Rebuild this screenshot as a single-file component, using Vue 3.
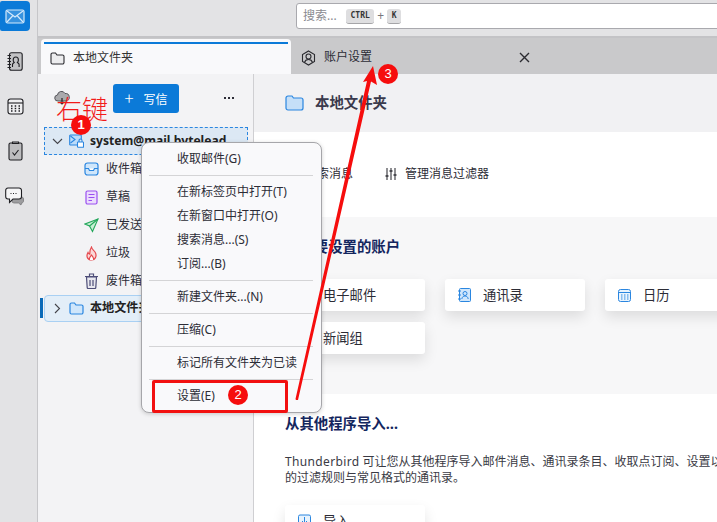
<script setup>
const menuGroups = [
  ['收取邮件(G)'],
  ['在新标签页中打开(T)', '在新窗口中打开(O)', '搜索消息...(S)', '订阅...(B)'],
  ['新建文件夹...(N)'],
  ['压缩(C)'],
  ['标记所有文件夹为已读'],
  ['设置(E)']
]
const marks = [
  { n: 1, cls: 'm1' },
  { n: 2, cls: 'm2' },
  { n: 3, cls: 'm3' }
]
</script>

<template>
  <div class="app">
    <nav class="rail">
      <div class="rail-btn active">
        <svg width="20" height="15" viewBox="0 0 20 15" fill="rgba(255,255,255,.18)" stroke="#d4e9fb" stroke-width="1.2"><rect x="1" y="1" width="18" height="13" rx="1.5"/><path d="M2 2l8 6 8-6M2 13l6-6.5M18 13l-6-6.5" fill="none"/></svg>
      </div>
      <div class="rail-btn">
        <svg width="16" height="19" viewBox="0 0 16 19" fill="#c2c2c4" stroke="#1f1f23" stroke-width="1.1"><rect x="2.500" y=".8" width="12.700" height="17.400" rx="2"/><path d="M.5 3.500h3.500M.5 6.500h3.500M.5 9.500h3.500M.5 12.500h3.500M.5 15.500h3.500" fill="none"/><path d="M5.500 15v-2.500c0-1 1-1.500 1.700-2-.7-.7-1-1.500-1-2.500C6.200 6.500 7.200 5 8.800 5s2.600 1.500 2.600 3c0 1-.3 1.800-1 2.500.7.500 1.700 1 1.700 2V15" fill="none"/></svg>
      </div>
      <div class="rail-btn">
        <svg width="17" height="17" viewBox="0 0 17 17" fill="#efeff1" stroke="#1f1f23" stroke-width="1.1"><rect x="1" y="1" width="15" height="15" rx="2.500"/><path d="M1 5h15" fill="none"/><path d="M4 8h1.500M7.700 8h1.500M11.500 8h1.500M4 10.500h1.500M7.700 10.500h1.500M11.500 10.500h1.500M4 13h1.500M7.700 13h1.500M11.500 13h1.500" fill="none" stroke-width="1.300"/></svg>
      </div>
      <div class="rail-btn">
        <svg width="15" height="20" viewBox="0 0 15 20" fill="#bdbdbf" stroke="#1f1f23" stroke-width="1.1"><rect x="1" y="2" width="13" height="17" rx="1.500"/><path d="M4.500 2.500V1h6v1.500z"/><path d="M4.500 11.500l2 2.500 4-5" fill="none"/></svg>
      </div>
      <div class="rail-btn">
        <svg width="20" height="19" viewBox="0 0 20 19"><path d="M7 10h10a2 2 0 0 1 1.500 2v2c0 1-.7 2-2 2l-.5 2-2.500-2H9a2 2 0 0 1-2-2z" fill="#9d9d9f" stroke="#77777a" stroke-width=".8"/><path d="M3 1h11a2.500 2.500 0 0 1 2.500 2.500v6A2.500 2.500 0 0 1 14 12H8l-3.500 3.500V12H3A2.500 2.500 0 0 1 .7 9.500v-6A2.500 2.500 0 0 1 3 1z" fill="#f5f5f6" stroke="#1f1f23" stroke-width="1.100"/><path d="M5.500 6.500h1M8 6.500h1M10.500 6.500h1" stroke="#1f1f23"/></svg>
      </div>
    </nav>

    <div class="main">
      <header class="topbar">
        <div class="search">
          <span class="placeholder">搜索...</span>
          <kbd class="key">CTRL</kbd>
          <span class="plus">+</span>
          <kbd class="key">K</kbd>
        </div>
      </header>

      <div class="tabs">
        <div class="tab selected">
          <svg width="15" height="13" viewBox="0 0 15 13" fill="#ececee" stroke="#2b2b30" stroke-width="1.100"><path d="M1 2.500A1.500 1.500 0 0 1 2.500 1h3L7 3h5.500A1.500 1.500 0 0 1 14 4.500v6a1.500 1.500 0 0 1-1.500 1.500h-10A1.500 1.500 0 0 1 1 10.500z"/></svg>
          <span>本地文件夹</span>
        </div>
        <div class="tab other">
          <svg width="15" height="16" viewBox="0 0 15 16" fill="none" stroke="#2b2b30" stroke-width="1.100"><path d="M7.500 1l6 3.500v7l-6 3.500-6-3.500v-7z"/><circle cx="7.500" cy="6.500" r="2.500"/><path d="M3.500 12.500c.5-2 2-3 4-3s3.500 1 4 3"/></svg>
          <span>账户设置</span>
          <svg class="close" width="11" height="11" viewBox="0 0 11 11" fill="none" stroke="#2b2b30" stroke-width="1.400"><path d="M1 1l9 9M10 1l-9 9"/></svg>
        </div>
      </div>

      <div class="body">
        <aside class="folders">
          <div class="pane-head">
            <svg class="cloud" width="16" height="16" viewBox="0 0 16 16"><path d="M4 11a3 3 0 0 1-.5-6A4 4 0 0 1 11 3.500 3.500 3.500 0 0 1 12 11z" fill="#a9a9ac" stroke="#55555a"/><path d="M8 8v6M6 12l2 2 2-2" fill="none" stroke="#222" stroke-width="1.200"/></svg>
            <button class="compose"><span class="compose-plus">+</span>写信</button>
            <span class="dots">
              <i></i><i></i><i></i>
            </span>
          </div>
          <div class="row account">
            <svg class="chev" width="11" height="7" viewBox="0 0 11 7" fill="none" stroke="#44444a" stroke-width="1.100"><path d="M1 1l4.500 4.500L10 1"/></svg>
            <svg class="acct-icon" width="15" height="14" viewBox="0 0 15 14" fill="#bcdcfa" stroke="#2a86e0" stroke-width="1.100"><path d="M8 11H1.500A.8.800 0 0 1 .7 10V2A.8.800 0 0 1 1.500 1h10a.8.800 0 0 1 .8 1v3"/><path d="M1.500 2l4.500 3.500L1.500 9" fill="none"/><rect x="8.500" y="8" width="6" height="5.300" rx=".6" fill="#fff"/><path d="M10 8V6.500a1.500 1.500 0 0 1 3 0V8" fill="none"/></svg>
            <b class="acct-name">system@mail.bytelead</b>
          </div>
          <div class="row child">
            <svg width="15" height="14" viewBox="0 0 15 14" fill="#cfe6fb" stroke="#2a86e0" stroke-width="1.200"><rect x="1" y="1" width="13" height="12" rx="2.500"/><path d="M1 6.500h3.500l1 2h4l1-2H14" fill="#fff"/></svg>
            <span>收件箱</span>
          </div>
          <div class="row child">
            <svg width="15" height="15" viewBox="0 0 15 15" fill="#ecdcfd" stroke="#9a4ff0" stroke-width="1.200"><rect x="2" y="1" width="11" height="13" rx="1.500"/><path d="M4.500 4.500h6M4.500 7.500h6M4.500 10.500h3.500" fill="none"/></svg>
            <span>草稿</span>
          </div>
          <div class="row child">
            <svg width="15" height="15" viewBox="0 0 15 15" fill="#c7f0d4" stroke="#22a65a" stroke-width="1.100"><path d="M14 1L1 6l4.500 2 3 5.500z"/><path d="M14 1L5.500 8" fill="none"/></svg>
            <span>已发送</span>
          </div>
          <div class="row child">
            <svg width="15" height="15" viewBox="0 0 15 15" fill="#fbd8d8" stroke="#e5484d" stroke-width="1.200"><path d="M7.500 1c.5 2.500 2 3 3.500 5 2 3 1 8-3.500 8S2 10 4 6.500c.4 1 1 1.500 1.700 1.700C5.700 5.500 6 3 7.500 1z"/><path d="M5.500 14c-.8-2 1-3.500 2-5 1.200 1.500 2.800 3 2 5" fill="#fff"/></svg>
            <span>垃圾</span>
          </div>
          <div class="row child">
            <svg width="15" height="16" viewBox="0 0 15 16" fill="#e7e7ee" stroke="#4d4d78" stroke-width="1.200"><path d="M2.500 4h10l-.7 10.500a1 1 0 0 1-1 1H4.200a1 1 0 0 1-1-1z"/><path d="M1 3.500h13M5.500 3V1h4v2M6 7v6M9 7v6" fill="none"/></svg>
            <span>废件箱</span>
          </div>
          <div class="row local">
            <svg class="chev" width="7" height="11" viewBox="0 0 7 11" fill="none" stroke="#44444a" stroke-width="1.100"><path d="M1 1l4.500 4.500L1 10"/></svg>
            <svg class="acct-icon" width="15" height="13" viewBox="0 0 15 13" fill="#cfe6fb" stroke="#2a86e0" stroke-width="1.200"><path d="M1 2.500A1.500 1.500 0 0 1 2.500 1h3L7 3h5.500A1.500 1.500 0 0 1 14 4.500v6a1.500 1.500 0 0 1-1.500 1.500h-10A1.500 1.500 0 0 1 1 10.500z"/></svg>
            <b class="acct-name">本地文件夹</b>
          </div>
        </aside>

        <section class="content">
          <div class="page-head">
            <svg width="19" height="16" viewBox="0 0 19 16" fill="#c5dff8" stroke="#2a86e0" stroke-width="1.200"><path d="M1 3A2 2 0 0 1 3 1h4l1.500 2H16a2 2 0 0 1 2 2v8a2 2 0 0 1-2 2H3a2 2 0 0 1-2-2z"/></svg>
            <h1>本地文件夹</h1>
          </div>
          <div class="band actions">
            <span class="act search-act">
              <svg width="12" height="12" viewBox="0 0 12 12" fill="none" stroke="#33333a" stroke-width="1.200"><circle cx="5" cy="5" r="3.800"/><path d="M8 8l3.500 3.500"/></svg>
              搜索消息
            </span>
            <span class="act">
              <svg width="12" height="12" viewBox="0 0 12 12" fill="none" stroke="#33333a" stroke-width="1.100"><path d="M2 0v12M6 0v12M10 0v12"/><path d="M.5 8h3M4.500 3h3M8.500 7h3" stroke-width="1.600"/></svg>
              管理消息过滤器
            </span>
          </div>
          <div class="band setup">
            <h2>选择要设置的账户</h2>
            <div class="cards">
              <div class="card">
                <svg width="13" height="13" viewBox="0 0 13 13" fill="#cfe6fb" stroke="#2a86e0"><rect x=".5" y="2" width="12" height="9" rx="1"/><path d="M1 3l5.500 4L12 3" fill="none"/></svg>
                <span>电子邮件</span>
              </div>
              <div class="card">
                <svg width="13" height="14" viewBox="0 0 13 14" fill="#cfe6fb" stroke="#2a86e0"><rect x="1.500" y=".5" width="11" height="13" rx="1"/><circle cx="7" cy="5.500" r="2" fill="none"/><path d="M3.800 11c.3-2 1.500-3 3.200-3s2.900 1 3.200 3M0 3h3M0 7h3M0 11h3" fill="none"/></svg>
                <span>通讯录</span>
              </div>
              <div class="card">
                <svg width="13" height="13" viewBox="0 0 13 13" fill="#e8f3fd" stroke="#2a86e0"><rect x=".5" y=".5" width="12" height="12" rx="2"/><path d="M.5 3.500h12" fill="none"/><path d="M3 6h1.500M6 6h1.500M9 6h1.500M3 8h1.500M6 8h1.500M9 8h1.500M3 10h1.500M6 10h1.500M9 10h1.500" fill="none"/></svg>
                <span>日历</span>
              </div>
              <div class="card">
                <svg width="13" height="13" viewBox="0 0 13 13" fill="#cfe6fb" stroke="#2a86e0"><rect x=".5" y="1" width="12" height="11" rx="1"/></svg>
                <span>新闻组</span>
              </div>
            </div>
          </div>
          <div class="band importer">
            <h2>从其他程序导入…</h2>
            <p>
              <span class="line"><span class="latin">Thunderbird</span> 可让您从其他程序导入邮件消息、通讯录条目、收取点订阅、设置以及简单</span>
              <span class="line">的过滤规则与常见格式的通讯录。</span>
            </p>
            <div class="card import-card">
              <svg width="13" height="14" viewBox="0 0 13 14" fill="#e8f3fd" stroke="#2a86e0"><rect x=".5" y="1" width="12" height="12" rx="1.500"/><path d="M6.500 3v6M4 7l2.500 2.500L9 7" fill="none"/></svg>
              <span>导入</span>
            </div>
          </div>
        </section>
      </div>
    </div>

    <!-- context menu floats over the panes -->
    <div class="menu">
      <template v-for="(group, g) in menuGroups" :key="g">
        <div v-if="g > 0" class="sep"></div>
        <div v-for="item in group" :key="item" class="item">{{ item }}</div>
      </template>
    </div>

    <!-- tutorial annotations drawn on top of the screenshot -->
    <div class="hl-box"></div>
    <span class="note">右键</span>
    <svg class="arrow" width="717" height="522" viewBox="0 0 717 522">
      <path d="M296 400L295.500 399L367 81L363 82L373 66L377 85L371 81.500L298 400z" fill="#f60d0d"/>
    </svg>
    <span v-for="m in marks" :key="m.n" class="mark" :class="m.cls">{{ m.n }}</span>
  </div>
</template>

<style>
html, body { margin: 0; padding: 0; overflow: hidden; }
</style>

<style scoped>
.app {
  position: relative;
  width: 717px;
  height: 522px;
  overflow: hidden;
  display: flex;
  background: #e3e3e5;
  color: #2c2c36;
  font: 12px/1.4 "Noto Sans", "Noto Sans CJK SC", sans-serif;
}
.rail {
  flex: none;
  box-sizing: border-box;
  width: 38px;
  padding-top: 1px;
  display: flex;
  flex-direction: column;
  gap: 15px;
  background: #e3e3e5;
  border-right: 1px solid #c6c6c9;
}
.rail-btn {
  width: 30px;
  height: 30px;
  display: flex;
  align-items: center;
  justify-content: center;
}
.rail-btn.active {
  background: #0b7ad8;
  border-radius: 2px 4px 4px 2px;
}
.main {
  flex: 1;
  min-width: 0;
  display: flex;
  flex-direction: column;
}
.topbar {
  flex: none;
  box-sizing: border-box;
  height: 38px;
  padding: 3px 0 0 258px;
  background: #e3e3e5;
  border-bottom: 2px solid #c3c3c6;
}
.search {
  box-sizing: border-box;
  width: 500px;
  height: 26px;
  display: flex;
  align-items: center;
  gap: 3px;
  padding-left: 6px;
  background: #fff;
  border: 1px solid #a9a9ae;
  border-radius: 3px;
}
.placeholder {
  width: 36px;
  margin-right: 4px;
  color: #8a8a90;
  font-size: 12px;
  white-space: nowrap;
}
.key {
  padding: 0 4.500px;
  height: 14px;
  font: bold 8px/14px "DejaVu Sans Mono", monospace;
  color: #333;
  background: #dedee0;
  border-bottom: 1px solid #a5a5a8;
  border-radius: 3px;
}
.plus { color: #77777c; font-size: 12px; }
.tabs {
  flex: none;
  height: 36px;
  display: flex;
  box-sizing: border-box;
  padding: 1px 0 0 3px;
  background: #c9c9cb;
}
.tab {
  display: flex;
  align-items: center;
  gap: 7px;
  box-sizing: border-box;
}
.tab.selected {
  width: 250px;
  padding: 4px 0 0 9px;
  gap: 8px;
  background: #f9f9fb;
  border-radius: 4px 4px 0 0;
  position: relative;
  color: #333;
}
.tab.selected::before {
  content: "";
  position: absolute;
  left: 3px;
  right: 3px;
  top: 3px;
  height: 2px;
  background: #0b7ad8;
}
.tab.other {
  flex: 1;
  padding: 2px 0 0 10px;
  gap: 8px;
  color: #2c2c36;
}
.close { margin-left: 139px; }
.body {
  flex: 1;
  min-height: 0;
  display: flex;
}
.folders {
  flex: none;
  box-sizing: border-box;
  width: 216px;
  padding-left: 6px;
  background: #f3f3f5;
  border-right: 1px solid #cfcfd2;
}
.pane-head {
  height: 53px;
  display: flex;
  align-items: center;
}
.cloud { margin: 0 0 6px 10px; }
.compose {
  width: 66px;
  height: 29px;
  margin: -5px 0 0 43px;
  padding: 0;
  display: flex;
  align-items: center;
  justify-content: center;
  gap: 10px;
  border: 0;
  border-radius: 3px;
  background: #0b7ad8;
  color: #fff;
  font: 12px "Noto Sans CJK SC", sans-serif;
}
.compose-plus { font-size: 17px; line-height: 1; margin-top: -2px; font-weight: 300; }
.dots {
  margin: -5px 0 0 45px;
  display: flex;
  gap: 2px;
}
.dots i {
  width: 2px;
  height: 2px;
  background: #2c2c36;
}
.row {
  box-sizing: border-box;
  height: 28px;
  width: 204px;
  display: flex;
  align-items: center;
  white-space: nowrap;
  overflow: hidden;
}
.row.child { padding-left: 40px; gap: 7px; }
.row.child svg { flex: none; }
.row.account {
  padding-left: 7px;
  background: #dce8f4;
  border: 1px dashed #2a86e0;
}
.row.local {
  height: 27px;
  padding-left: 7px;
  background: #e3eef8;
  border: 1px solid #a9d0f3;
  border-radius: 4px;
  position: relative;
  overflow: visible;
}
.row.local::before {
  content: "";
  position: absolute;
  left: -5px;
  top: 2px;
  width: 3px;
  height: 20px;
  background: #0a6ab8;
}
.chev { flex: none; width: 11px; }
.acct-icon { flex: none; margin-left: 6px; }
.acct-name {
  margin-left: 6px;
  font-size: 12.100px;
  font-weight: 700;
  color: #222;
}
.content {
  flex: 1;
  min-width: 0;
  overflow: hidden;
  background: #fff;
}
.page-head {
  box-sizing: border-box;
  height: 58px;
  padding-left: 31px;
  display: flex;
  align-items: center;
  gap: 11px;
  background: #f1f1f3;
}
.page-head h1 {
  margin: 0;
  font-size: 14.400px;
  font-weight: 700;
  color: #3a3a4c;
}
.band { padding-left: 31px; }
.actions {
  box-sizing: border-box;
  height: 85px;
  display: flex;
  align-items: center;
  gap: 32px;
  background: #fff;
}
.act { display: flex; align-items: center; gap: 8px; white-space: nowrap; }
.setup {
  box-sizing: border-box;
  height: 177px;
  padding-top: 20px;
  background: #f7f7f8;
}
h2 {
  margin: 0;
  height: 20px;
  font-size: 14.400px;
  line-height: 20px;
  font-weight: 700;
  color: #14265e;
  white-space: nowrap;
}
.cards {
  margin-top: 22px;
  display: grid;
  grid-template-columns: repeat(3, 140px);
  gap: 11px 20px;
  width: 460px;
}
.card {
  box-sizing: border-box;
  width: 140px;
  height: 32px;
  padding-left: 13px;
  display: flex;
  align-items: center;
  gap: 12px;
  background: #fff;
  border-radius: 3px;
  font-size: 13.300px;
  box-shadow: 0 6px 14px rgba(0, 0, 0, .11);
}
.importer { padding-top: 20px; }
.importer p {
  margin: 20px 0 0;
  line-height: 16px;
  white-space: nowrap;
  color: #3a3a44;
}
.line { display: block; }
.latin { letter-spacing: .35px; }
.import-card { margin-top: 19px; }
.menu {
  position: absolute;
  left: 141px;
  top: 142px;
  box-sizing: border-box;
  width: 181px;
  padding: 4px 0;
  background: #f9f9fb;
  border: 1px solid #a6a6aa;
  border-radius: 8px;
  box-shadow: 0 1px 4px rgba(0, 0, 0, .18);
}
.item {
  height: 24px;
  line-height: 24px;
  padding-left: 35px;
  color: #2c2c36;
  white-space: nowrap;
}
.sep {
  height: 1px;
  margin: 4px 8px 4px 7px;
  background: #d4d4d6;
}
.hl-box {
  position: absolute;
  left: 152px;
  top: 380px;
  box-sizing: border-box;
  width: 136px;
  height: 33px;
  border: 3px solid #f21010;
  border-radius: 2px;
}
.note {
  position: absolute;
  left: 56px;
  top: 91px;
  font-size: 26px;
  line-height: 36px;
  font-weight: 300;
  color: #f21b1b;
  white-space: nowrap;
}
.arrow {
  position: absolute;
  left: 0;
  top: 0;
}
.mark {
  position: absolute;
  width: 20px;
  height: 20px;
  border-radius: 50%;
  background: #f60d0d;
  color: #fff;
  text-align: center;
  font: 700 13px/20px "Liberation Sans", sans-serif;
}
.m1 { left: 71px; top: 115px; }
.m2 { left: 228px; top: 385px; font-weight: 400; }
.m3 { left: 378px; top: 64px; font-weight: 400; }
</style>
